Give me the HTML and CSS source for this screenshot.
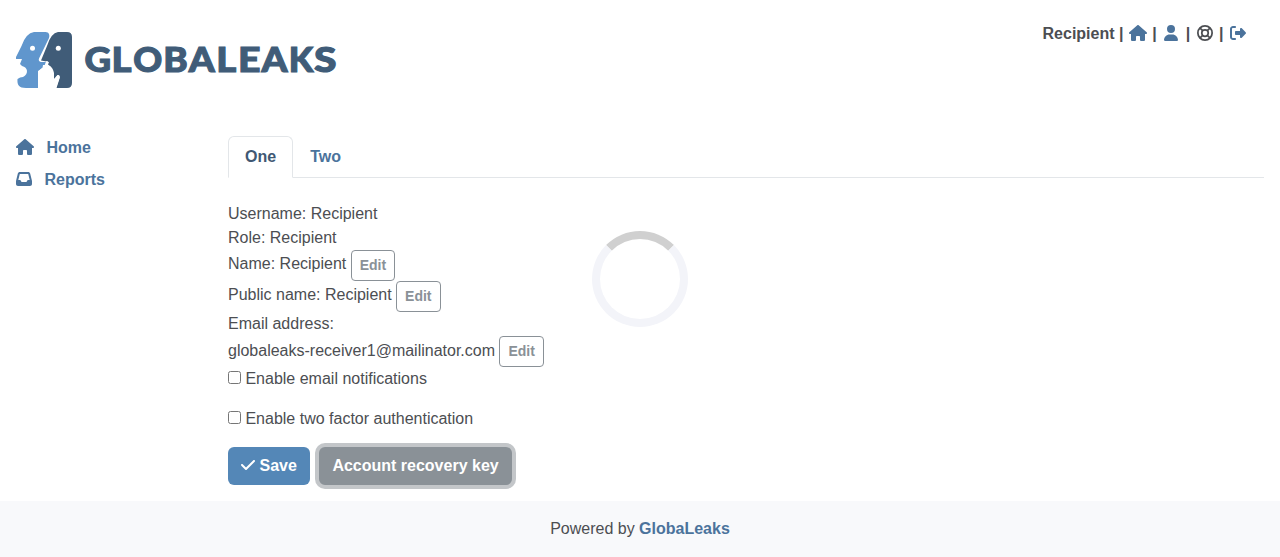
FILE: index.html
```html
<!DOCTYPE html>
<html lang="en">
<head>
<meta charset="utf-8">
<title>GlobaLeaks</title>
<link rel="stylesheet" href="styles.css">
</head>
<body>
<svg class="defs" width="0" height="0">
  <symbol id="home" viewBox="0 0 576 512"><path d="M575.8 255.5c0 18-15 32.1-32 32.1h-32l.7 160.2c0 2.7-.2 5.4-.5 8.1V472c0 22.1-17.9 40-40 40H456c-1.1 0-2.2 0-3.3-.1c-1.4 .1-2.8 .1-4.2 .1H416 392c-22.1 0-40-17.9-40-40V448 384c0-17.7-14.3-32-32-32H256c-17.7 0-32 14.3-32 32v64 24c0 22.1-17.9 40-40 40H160 128.1c-1.5 0-3-.1-4.5-.2c-1.2 .1-2.4 .2-3.6 .2H104c-22.1 0-40-17.9-40-40V360c0-.9 0-1.9 .1-2.8V287.6H32c-18 0-32-14-32-32.1c0-9 3-17 10-24L266.4 8c7-7 15-8 22-8s15 2 21 7L564.8 231.5c8 7 12 15 11 24z"/></symbol>
</svg>
<header class="header">
  <svg class="logo" width="322" height="58" viewBox="15 31 322 58">
    <path fill="#6096cd" d="M34 32H45.500C49 32 50 35 49 38L39 58.500Q38 61 41 62H46.500L47 65H43L42.500 68L38 71V88H26C19 88 17 85 17.500 79Q20 77 23 77C29 74 28 67 22 66L20 64L22 59H16V57L21.500 46Q26 33 34 32Z"/>
    <path fill="#405c78" d="M58 32H67Q72 32 72 37V83Q72 88 67 88H56.500L60 77Q59.500 74.500 57.500 75L55 79L53 78L52.500 71L50 66L48 64.500L49 62L41 60.500L47 46Q51 33 58 32Z"/>
    <path fill="#fff" d="M38 88V73Q39 70 42 68L44 67L46 61.500Q47.500 60.500 48 62L47 67L50 66Q53 68 54 73V79L57 75.500Q59.500 74 59.500 78L56 88Z"/>
    <circle cx="32.500" cy="48.300" r="2.500" fill="#fff"/>
    <circle cx="58.300" cy="48.300" r="2.500" fill="#fff"/>
    <g class="wordmark" transform="translate(0 72)">
      <text x="84.600" textLength="26.600" lengthAdjust="spacingAndGlyphs">G</text><text x="111.600" textLength="20.000" lengthAdjust="spacingAndGlyphs">L</text><text x="133.300" textLength="29" lengthAdjust="spacingAndGlyphs">O</text><text x="163.200" textLength="24.500" lengthAdjust="spacingAndGlyphs">B</text><text x="188.800" textLength="26" lengthAdjust="spacingAndGlyphs">A</text><text x="216.300" textLength="20" lengthAdjust="spacingAndGlyphs">L</text><text x="238" textLength="22.500" lengthAdjust="spacingAndGlyphs">E</text><text x="261.500" textLength="26" lengthAdjust="spacingAndGlyphs">A</text><text x="288.700" textLength="24.500" lengthAdjust="spacingAndGlyphs">K</text><text x="314" textLength="22.500" lengthAdjust="spacingAndGlyphs">S</text>
    </g>
  </svg>
  <nav class="account">
    <span>Recipient</span><span>|</span>
    <svg class="icon" width="20" height="16"><use href="#home" x="1" width="18" height="16"/></svg><span>|</span>
    <svg class="icon" width="20" height="16" viewBox="0 0 448 512"><path d="M224 256A128 128 0 1 0 224 0a128 128 0 1 0 0 256zm-45.7 48C79.8 304 0 383.8 0 482.3C0 498.7 13.3 512 29.7 512H418.3c16.4 0 29.7-13.3 29.7-29.7C448 383.8 368.2 304 269.7 304H178.3z"/></svg><span>|</span>
    <svg class="icon ring" width="20" height="16" viewBox="0 0 512 512"><circle cx="256" cy="256" r="228"/><circle cx="256" cy="256" r="104"/><path d="M98 98l84 84M414 98l-84 84M98 414l84-84M414 414l-84-84"/></svg><span>|</span>
    <svg class="icon" width="20" height="16" viewBox="0 0 512 512"><path d="M377.9 105.9L500.7 228.7c7.2 7.2 11.3 17.1 11.3 27.3s-4.1 20.1-11.3 27.3L377.9 406.1c-6.4 6.4-15 9.9-24 9.9c-18.7 0-33.9-15.2-33.9-33.9l0-62.1-128 0c-17.7 0-32-14.3-32-32l0-64c0-17.7 14.3-32 32-32l128 0 0-62.1c0-18.7 15.2-33.9 33.9-33.9c9 0 17.6 3.6 24 9.9zM160 96L96 96c-17.7 0-32 14.3-32 32l0 256c0 17.7 14.3 32 32 32l64 0c17.7 0 32 14.3 32 32s-14.3 32-32 32l-64 0c-53 0-96-43-96-96L0 128C0 75 43 32 96 32l64 0c17.7 0 32 14.3 32 32s-14.3 32-32 32z"/></svg>
  </nav>
</header>
<div class="main">
  <aside class="sidebar">
    <a class="side-link"><svg class="icon" width="18" height="16"><use href="#home"/></svg>Home</a>
    <a class="side-link"><svg class="icon" width="16" height="16" viewBox="0 0 512 512"><path d="M121 32C91.6 32 66 52 58.9 80.5L1.9 308.4C.6 313.5 0 318.7 0 323.9V416c0 35.3 28.7 64 64 64H448c35.3 0 64-28.7 64-64V323.9c0-5.2-.6-10.4-1.9-15.5l-57-227.9C446 52 420.4 32 391 32H121zm0 64H391l48 192H387.8c-12.1 0-23.2 6.8-28.6 17.7l-14.3 28.6c-5.4 10.8-16.5 17.700-28.600 17.700H195.8c-12.1 0-23.2-6.8-28.6-17.7l-14.3-28.6c-5.4-10.8-16.5-17.7-28.6-17.7H73L121 96z"/></svg>Reports</a>
  </aside>
  <main class="content">
    <div class="tabs"><a class="tab active">One</a><a class="tab">Two</a></div>
    <div class="row">Username: Recipient</div>
    <div class="row">Role: Recipient</div>
    <div class="row editable">Name: Recipient <button class="edit">Edit</button></div>
    <div class="row editable">Public name: Recipient <button class="edit">Edit</button></div>
    <div class="row">Email address:</div>
    <div class="row">globaleaks-receiver1@mailinator.com <button class="edit">Edit</button></div>
    <label class="check"><input type="checkbox"> Enable email notifications</label>
    <label class="check"><input type="checkbox"> Enable two factor authentication</label>
    <div class="actions">
      <button class="btn save"><svg width="14" height="16" viewBox="0 0 448 512"><path fill="#fff" d="M438.6 105.4c12.5 12.5 12.5 32.8 0 45.3l-256 256c-12.5 12.5-32.8 12.5-45.3 0l-128-128c-12.5-12.5-12.5-32.8 0-45.3s32.8-12.5 45.3 0L160 338.7 393.4 105.4c12.5-12.5 32.8-12.5 45.3 0z"/></svg>Save</button>
      <button class="btn recovery">Account recovery key</button>
    </div>
  </main>
</div>
<footer class="footer">Powered by&nbsp;<a class="brand">GlobaLeaks</a></footer>
<div class="spinner"></div>
</body>
</html>
```

FILE: styles.css
```css
* { box-sizing: border-box; }
body { margin: 0; height: 557px; overflow: hidden; display: flex; flex-direction: column; background: #fff; color: #4c4e52; font: 16px/24px "Liberation Sans", Arial, sans-serif; }
.defs { display: none; }
.header { height: 136px; display: flex; justify-content: space-between; align-items: flex-start; padding: 22px 32px 0 15px; }
.logo { margin-top: 9px; }
.wordmark { font: 900 35px Lato, sans-serif; fill: #405c78; stroke: #405c78; stroke-width: 1.1px; }
.account { display: flex; align-items: center; gap: 4.45px; font-weight: bold; }
.icon { fill: #4b739c; display: block; flex: none; margin-bottom: 2px; }
.account .ring { fill: none; stroke: #4c4e52; stroke-width: 56; }
.main { display: flex; height: 365px; padding: 0 16px; }
.sidebar { width: 212px; flex: none; }
.side-link { display: flex; align-items: center; gap: 12.5px; height: 24px; margin-bottom: 8px; color: #4b739c; font-weight: bold; }
.content { flex: 1; }
.tabs { display: flex; height: 42px; border-bottom: 1px solid #e3e6e9; margin-bottom: 24px; }
.tab { height: 42px; padding: 8px 16px; border: 1px solid transparent; color: #4b739c; font-weight: bold; }
.tab.active { background: #fff; border-color: #e3e6e9 #e3e6e9 #fff; border-radius: 6px 6px 0 0; color: #405873; }
.edit { height: 31px; padding: 4px 8px; border: 1px solid #8a9197; border-radius: 4px; background: transparent; color: #8a9197; font: bold 14px/21px "Liberation Sans", Arial, sans-serif; vertical-align: middle; }
.editable { height: 31px; line-height: 22px; }
.editable .edit { margin-bottom: -2px; }
.check { display: block; height: 24px; margin-bottom: 16px; }
.check input { width: 13px; height: 13px; margin: 0; }
.actions { display: flex; gap: 9px; }
.btn { height: 38px; padding: 6px 12px; border: 1px solid transparent; border-radius: 6px; color: #fff; font: bold 16px/24px "Liberation Sans", Arial, sans-serif; display: flex; align-items: center; gap: 4.5px; }
.btn svg { margin-bottom: 2px; }
.save { background: #5487b7; }
.recovery { background: #8a9197; box-shadow: 0 0 0 4px #c3c6c9; padding: 6px 12.5px; }
.footer { height: 56px; display: flex; align-items: center; justify-content: center; background: #f8f9fb; }
.brand { color: #4b739c; font-weight: bold; }
.spinner { position: absolute; left: 592px; top: 231px; width: 96px; height: 96px; border: 8px solid #f3f4f9; border-top-color: #d0d0d0; border-radius: 50%; }
```
